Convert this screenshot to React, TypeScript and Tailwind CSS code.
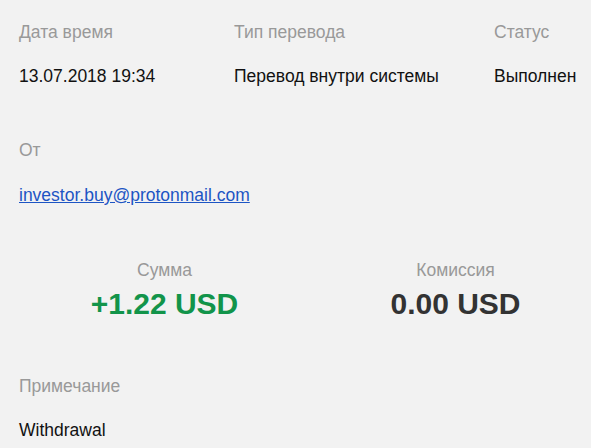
export default function App() {
  return (
    <div className="min-h-[448px] w-[591px] overflow-hidden bg-[#f2f2f2] pl-[19px] pt-[22px] font-['Liberation_Sans',Arial,sans-serif] text-[17.5px] leading-[20px] text-[#111]">
      <div className="flex">
        <div className="w-[215px]">
          <div className="text-[#999]">Дата время</div>
          <div className="mt-[24px]">13.07.2018 19:34</div>
        </div>
        <div className="w-[260px]">
          <div className="text-[#999]">Тип перевода</div>
          <div className="mt-[24px]">Перевод внутри системы</div>
        </div>
        <div>
          <div className="text-[#999]">Статус</div>
          <div className="mt-[24px]">Выполнен</div>
        </div>
      </div>

      <div className="mt-[54px]">
        <div className="text-[#999]">От</div>
        <a href="#" className="mt-[25px] block w-fit text-[#1d55c4] underline">
          investor.buy@protonmail.com
        </a>
      </div>

      <div className="mt-[55px] grid w-[582px] grid-cols-2 text-center">
        <div>
          <div className="text-[#999]">Сумма</div>
          <div className="mt-[6px] text-[30px] leading-[36px] font-bold text-[#12944a]">+1.22 USD</div>
        </div>
        <div>
          <div className="text-[#999]">Комиссия</div>
          <div className="mt-[6px] text-[30px] leading-[36px] font-bold text-[#333]">0.00 USD</div>
        </div>
      </div>

      <div className="mt-[54px]">
        <div className="text-[#999]">Примечание</div>
        <div className="mt-[24px]">Withdrawal</div>
      </div>
    </div>
  );
}
